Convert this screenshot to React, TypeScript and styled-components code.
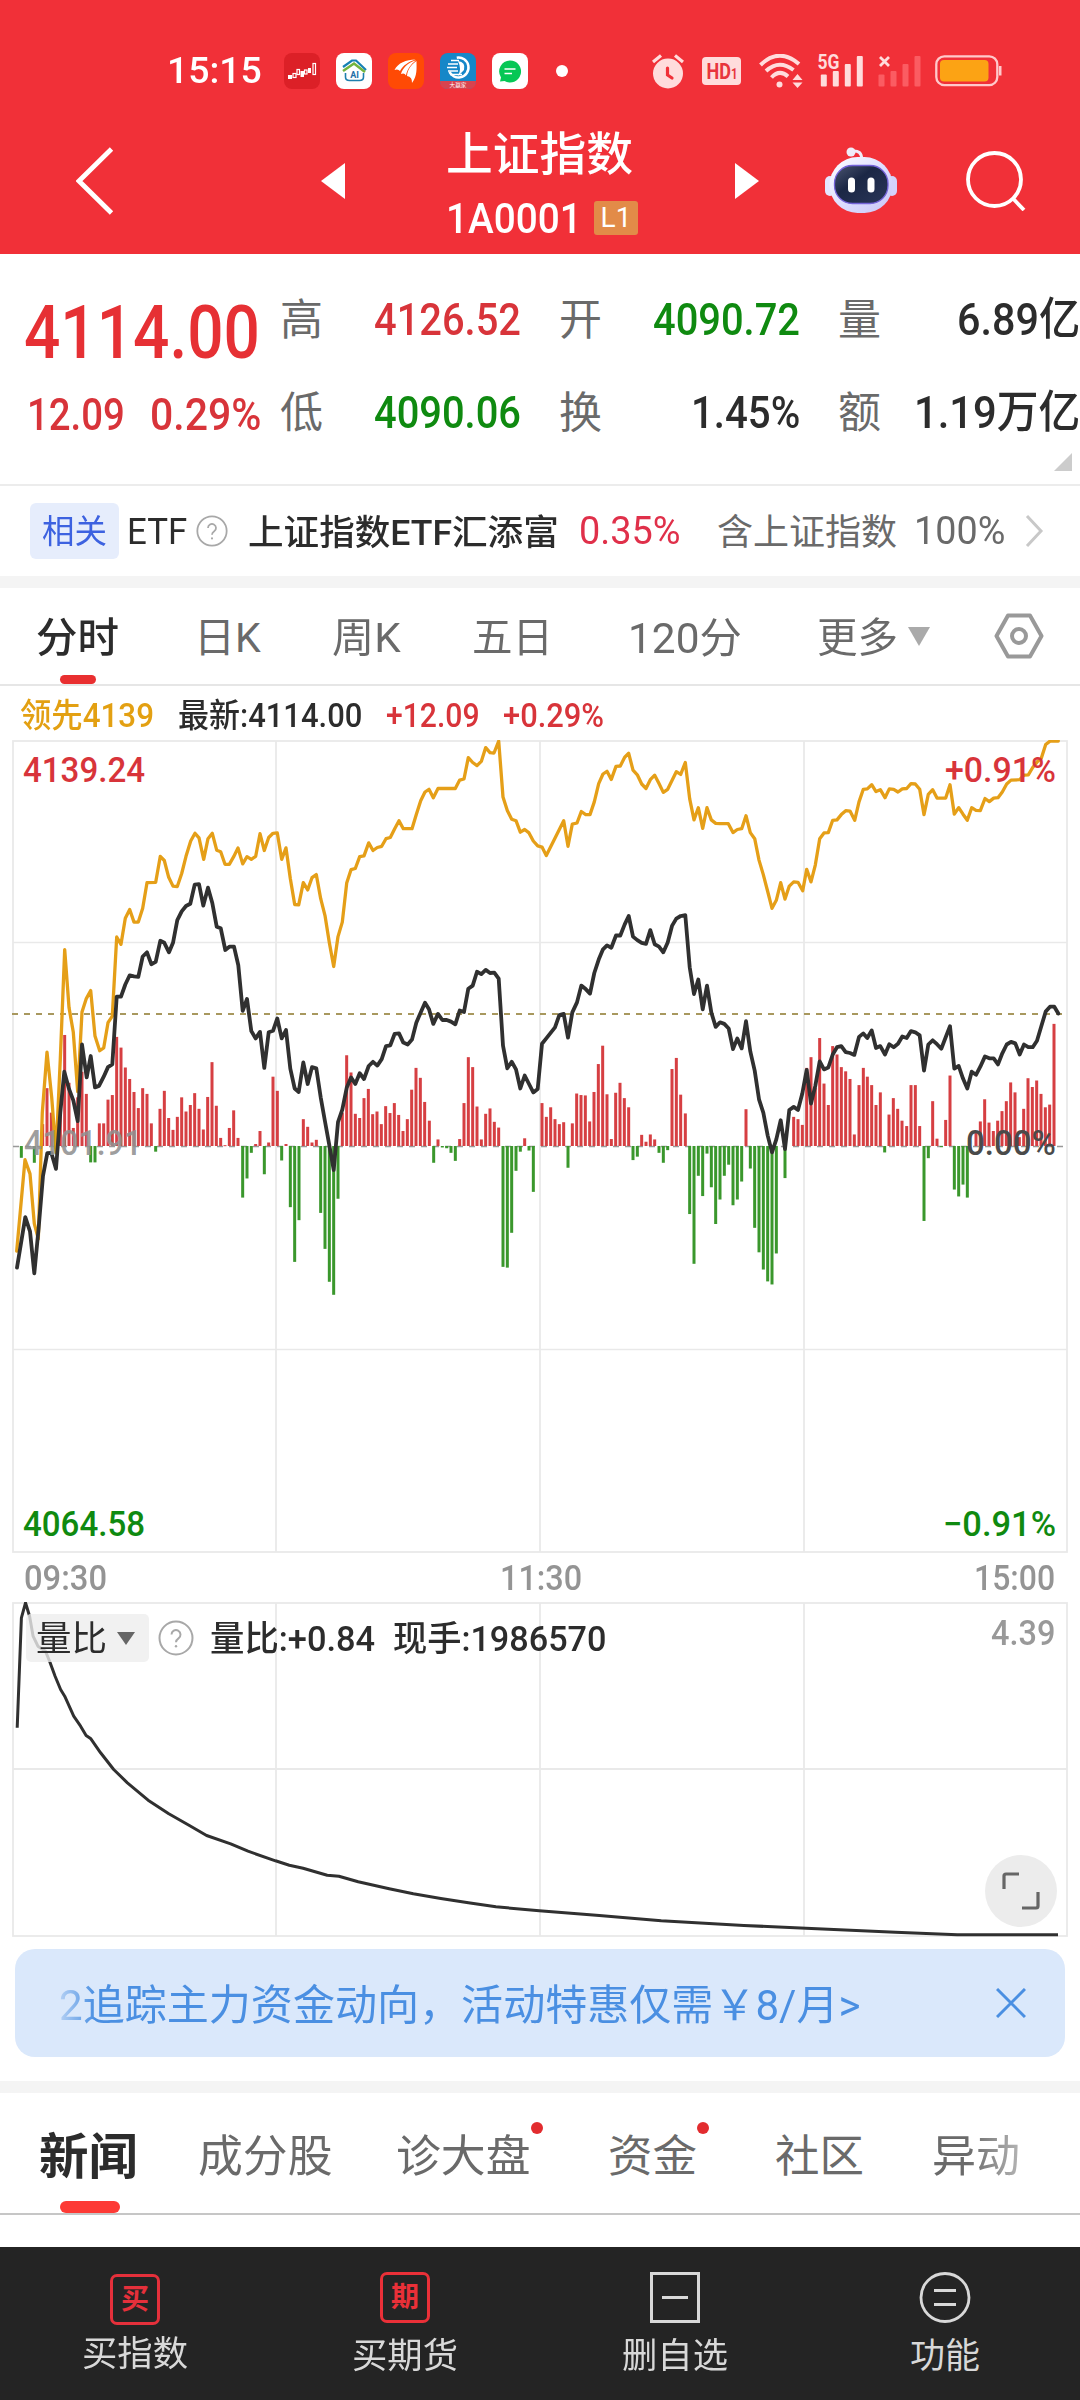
import React, { useLayoutEffect, useRef, useState } from "react";
import styled, { createGlobalStyle } from "styled-components";

const Global = createGlobalStyle`
  * { box-sizing: border-box; }
  body { margin: 0; background: #fff; font-family: Roboto, "Noto Sans CJK SC", sans-serif; }
  svg { display: block; flex: none; }
`;

const RED = "#d8343a";
const GREEN = "#0f8a10";
const INK = "#2c2c2c";
const GREY = "#6a6a6a";

/* ---------- text that is condensed to a set width ---------- */

const FitBox = styled.span<{ $w: number; $size: number; $ml?: number; $color?: string; $weight?: number; $dy?: number }>`
  display: block;
  flex: none;
  width: ${(p) => p.$w}px;
  height: ${(p) => Math.round(p.$size * 1.2)}px;
  line-height: ${(p) => Math.round(p.$size * 1.2)}px;
  margin-left: ${(p) => p.$ml ?? 0}px;
  margin-top: ${(p) => p.$dy ?? 0}px;
  font-size: ${(p) => p.$size}px;
  font-weight: ${(p) => p.$weight ?? 400};
  color: ${(p) => p.$color ?? "inherit"};
  white-space: pre;
`;
const FitInner = styled.span`
  display: inline-block;
  transform-origin: 0 50%;
`;

type FitProps = { w: number; size: number; ml?: number; color?: string; weight?: number; dy?: number; children: React.ReactNode };

function Fit({ w, size, ml, color, weight, dy, children }: FitProps) {
  const ref = useRef<HTMLSpanElement>(null);
  const [scale, setScale] = useState(1);
  useLayoutEffect(() => {
    if (ref.current) setScale(w / ref.current.offsetWidth);
  }, [w]);
  return (
    <FitBox $w={w} $size={size} $ml={ml} $color={color} $weight={weight} $dy={dy}>
      <FitInner ref={ref} style={{ transform: `scaleX(${scale})` }}>
        {children}
      </FitInner>
    </FitBox>
  );
}

/* ---------- layout ---------- */

const Screen = styled.main`
  width: 1080px;
  height: 2400px;
  display: flex;
  flex-direction: column;
  overflow: hidden;
  background: #fff;
  color: ${INK};
`;
const Header = styled.header`
  height: 254px;
  background: #f13038;
  color: #fff;
  flex: none;
`;
const StatusBar = styled.div`
  height: 106px;
  padding: 36px 78px 0 167px;
  display: flex;
  align-items: center;
`;
const StatusGroup = styled.div<{ $gap: number; $ml: string }>`
  display: flex;
  align-items: center;
  gap: ${(p) => p.$gap}px;
  margin-left: ${(p) => p.$ml};
`;
const TitleBar = styled.div`
  height: 148px;
  display: flex;
  align-items: center;
  padding: 2px 55px 0 76px;
`;
const TitleBlock = styled.div`
  width: 192px;
  margin: 8px 96px 0 101px;
  display: flex;
  flex-direction: column;
  gap: 10px;
`;
const CodeRow = styled.div`
  display: flex;
  align-items: center;
`;
const Level = styled.span`
  width: 48px;
  height: 34px;
  margin-left: 12px;
  background: #e28b48;
  border-radius: 3px;
  display: flex;
  justify-content: center;
  align-items: center;
  font-size: 28px;
  line-height: 34px;
`;
const Spacer = styled.div<{ $w: number }>`
  width: ${(p) => p.$w}px;
  flex: none;
`;

const Quotes = styled.section`
  height: 232px;
  border-bottom: 2px solid #ececec;
  display: grid;
  grid-template-columns: 280px 241px 38px 241px 38px 242px;
  grid-template-rows: 46px 46px;
  row-gap: 47px;
  padding-top: 43px;
  position: relative;
  flex: none;
`;
const QuoteCell = styled.div`
  display: flex;
  justify-content: space-between;
  align-items: center;
`;
const ChangeCell = styled.div`
  display: flex;
  align-items: center;
  padding: 3px 0 0 27px;
`;
const MainPrice = styled.div`
  display: flex;
  align-items: center;
  padding: 24px 0 0 24px;
  height: 46px;
`;
const Corner = styled.i`
  position: absolute;
  right: 8px;
  bottom: 13px;
  border-left: 18px solid transparent;
  border-bottom: 18px solid #ccc;
`;

const EtfRow = styled.section`
  height: 90px;
  display: flex;
  align-items: center;
  padding-left: 30px;
  flex: none;
`;
const RelChip = styled.span`
  width: 89px;
  height: 56px;
  border-radius: 6px;
  background: #e6edfc;
  display: flex;
  align-items: center;
  padding-left: 12px;
`;
const Band = styled.div<{ $h: number; $mt?: number }>`
  height: ${(p) => p.$h}px;
  margin-top: ${(p) => p.$mt ?? 0}px;
  background: #f4f4f4;
  flex: none;
`;
const Tabs = styled.nav<{ $h: number; $line: string }>`
  height: ${(p) => p.$h}px;
  display: flex;
  align-items: center;
  border-bottom: 2px solid ${(p) => p.$line};
  position: relative;
  flex: none;
  color: ${GREY};
`;
const Underline = styled.i<{ $w: number; $h: number; $c: string }>`
  position: absolute;
  left: 60px;
  bottom: 0;
  width: ${(p) => p.$w}px;
  height: ${(p) => p.$h}px;
  border-radius: ${(p) => p.$h / 2}px;
  background: ${(p) => p.$c};
`;
const InfoLine = styled.div`
  height: 54px;
  display: flex;
  align-items: center;
  padding: 6px 0 0 20px;
  flex: none;
`;
const TimeAxis = styled.div`
  height: 49px;
  display: flex;
  align-items: center;
  justify-content: space-between;
  padding: 2px 25px 0 24px;
  color: #949494;
  flex: none;
`;
const Panel = styled.div`
  position: relative;
  height: 335px;
  flex: none;
`;
const PanelHead = styled.div`
  position: absolute;
  top: 12px;
  left: 26px;
  right: 25px;
  height: 48px;
  display: flex;
  align-items: center;
`;
const Picker = styled.span`
  width: 123px;
  height: 48px;
  border-radius: 5px;
  background: rgba(238, 238, 238, 0.8);
  display: flex;
  align-items: center;
  padding-left: 10px;
  margin-right: 9px;
`;
const Triangle = styled.i<{ $w: number; $h: number; $c: string; $ml: number }>`
  margin-left: ${(p) => p.$ml}px;
  border: solid transparent;
  border-width: ${(p) => p.$h}px ${(p) => p.$w / 2}px 0;
  border-top-color: ${(p) => p.$c};
`;
const Expand = styled.button`
  position: absolute;
  right: 23px;
  bottom: 10px;
  width: 72px;
  height: 72px;
  padding: 0;
  border: 0;
  border-radius: 50%;
  background: #ececec;
  display: flex;
  align-items: center;
  justify-content: center;
`;
const Banner = styled.div`
  margin: 12px 15px 0;
  height: 108px;
  border-radius: 20px;
  background: #dae8fb;
  color: #4a8fe2;
  display: flex;
  align-items: center;
  justify-content: space-between;
  padding: 0 39px 0 44px;
  flex: none;
`;
const BannerText = styled.div`
  display: flex;
  mask-image: linear-gradient(90deg, rgba(0, 0, 0, 0.25), #000 36px);
`;
const Dot = styled.i`
  width: 12px;
  height: 12px;
  margin: -50px 0 0 0;
  border-radius: 50%;
  background: #e22c2f;
`;
const Faded = styled.span`
  margin-left: 68px;
  mask-image: linear-gradient(90deg, #000 40%, rgba(0, 0, 0, 0.5));
`;
const BottomBar = styled.footer`
  height: 153px;
  margin-top: auto;
  background: #242424;
  color: #d8d8d8;
  display: grid;
  grid-template-columns: repeat(4, 1fr);
  flex: none;
`;
const Action = styled.div`
  display: flex;
  flex-direction: column;
  align-items: center;
  padding-top: 25px;
  gap: 13px;
`;
const Boxed = styled.span<{ $c: string; $drop?: number }>`
  width: 50px;
  height: 51px;
  margin: ${(p) => p.$drop ?? 0}px 0 ${(p) => -(p.$drop ?? 0) * 2}px;
  border: 3px solid ${(p) => p.$c};
  border-radius: 7px;
  color: ${(p) => p.$c};
  display: flex;
  align-items: center;
  justify-content: center;
  font-size: 28px;
  line-height: 40px;
  font-weight: 700;
`;

/* ---------- chart data ---------- */

/* Three 360px wide panels; each entry is x,y pairs at 3x horizontal and 2.613x vertical resolution. */
const LEAD = [
  "50,1362 75,1123 90,1160 103,1290 115,1330 127,1000 141,842 155,960 168,1105 181,860 194,574 207,725 220,790 233,945 246,737 259,702 272,681 285,800 299,838 311,831 324,765 337,748 350,541 363,560 376,492 389,469 402,502 415,502 428,466 441,399 467,398 481,330 493,341 506,385 519,408 532,409 545,375 558,330 572,290 585,270 597,282 611,338 624,284 637,270 650,314 662,318 675,351 688,351 701,331 714,308 728,350 741,331 754,338 767,330 780,271 793,315 806,281 819,270 832,269 845,338 858,308 871,388 884,456 896,457 910,399 923,418 936,386 949,378 962,441 975,485 988,555 1001,618 1014,540 1027,502 1040,400 1053,365 1066,362 1079,331",
  "12,329 26,295 39,315 52,307 65,304 78,284 91,281 104,258 117,237 130,258 156,258 169,221 182,185 195,162 207,155 220,177 234,153 286,153 299,131 312,128 325,72 338,85 351,93 364,82 377,46 390,59 402,60 416,29 429,175 442,210 455,233 468,237 481,267 494,260 507,269 520,290 533,303 546,306 559,328 611,237 624,304 637,246 651,243 664,213 677,221 690,221 703,188 716,140 729,115 741,108 754,129 768,95 781,94 794,71 806,61 819,105 832,117 845,141 858,153 871,130 884,118 897,140 910,163 923,155 936,132 949,109 962,116 976,85 989,180 1002,235 1015,203 1028,257 1041,203 1054,235 1067,244 1080,245",
  "25,245 39,268 52,260 65,258 78,224 91,268 104,284 117,340 130,378 143,422 156,466 169,445 182,399 195,442 208,408 221,397 234,398 248,420 260,364 273,397 286,353 299,284 312,269 325,268 338,236 351,235 364,221 377,211 390,212 404,236 417,188 430,155 442,154 455,143 468,161 481,156 495,177 508,154 521,155 534,162 547,154 560,153 573,140 586,141 599,155 612,221 625,168 638,156 651,178 677,178 690,143 703,220 716,203 729,220 742,236 755,203 768,210 781,211 795,179 808,187 821,178 834,177 847,162 860,141 873,131 899,130 912,118 925,117 938,98 951,84 964,74 977,38 990,29 1015,29",
];
const PRICE = [
  "51,1405 76,1273 90,1310 103,1420 116,1300 129,1165 142,1106 154,1105 168,1147 181,1000 193,893 207,938 220,968 233,1022 246,822 260,908 272,852 285,934 297,930 311,906 324,881 337,874 350,697 363,697 376,665 389,641 402,644 415,645 428,592 441,581 454,612 467,606 481,551 493,556 507,581 519,556 532,497 545,474 558,460 571,454 584,404 597,403 610,459 624,412 637,452 650,514 662,518 676,575 689,566 702,566 715,615 728,734 741,703 754,787 767,806 780,789 793,883 806,790 819,786 832,754 845,806 858,784 871,885 884,937 896,946 910,869 923,925 936,881 949,884 962,960 975,1023 988,1085 1001,1150 1014,1025 1027,992 1040,935 1053,908 1066,925 1079,897",
  "12,912 26,878 39,867 52,877 65,860 78,826 91,824 104,794 117,793 130,817 143,822 156,809 169,765 182,738 195,713 207,730 220,768 234,742 247,758 260,758 273,762 286,769 299,733 312,737 325,676 338,668 351,632 364,638 377,627 390,635 403,634 416,650 429,825 442,884 455,867 468,887 481,937 494,903 507,925 520,947 533,938 546,820 559,806 585,777 598,745 611,742 624,804 637,738 651,712 664,668 677,677 690,689 703,635 716,600 729,573 741,563 754,569 768,537 781,537 794,508 806,486 819,540 832,549 845,556 858,559 871,523 884,560 897,566 910,581 923,555 936,512 949,493 962,486 976,484 989,620 1002,690 1015,652 1028,730 1041,668 1054,738 1067,776 1080,764",
  "13,768 26,780 39,834 52,806 65,832 78,761 91,840 104,890 117,965 130,1000 143,1060 156,1104 169,1070 182,1020 195,1095 208,993 221,985 234,993 247,950 260,888 273,976 286,930 299,866 312,887 325,882 338,848 351,829 364,826 377,842 390,844 403,849 417,802 430,793 442,805 455,785 468,831 481,826 495,848 508,821 521,829 534,820 547,801 560,805 573,787 586,790 599,798 612,890 625,822 638,811 651,821 664,833 677,803 690,774 703,885 716,878 729,911 742,937 755,893 768,901 781,880 795,853 808,858 821,858 834,874 847,845 860,822 873,815 886,819 899,848 912,822 925,829 938,829 951,812 964,774 977,736 990,723 1003,723 1015,741",
];
const BARS = [
  "64,1118 103,1131 128,1030 141,936 154,1000 168,1080 181,980 194,797 207,922 220,1040 233,960 246,893 259,951 272,1130 285,1130 298,1028 311,1028 324,966 337,954 350,802 363,830 376,882 389,912 402,946 415,988 428,936 441,951 454,1028 467,1102 480,990 493,943 506,1014 519,1045 532,1011 545,960 558,997 571,980 584,949 597,990 610,1044 623,959 636,868 649,982 662,1066 675,1085 688,1040 701,994 714,1066 728,1222 741,1172 754,1105 767,1082 780,1048 793,1161 806,1078 819,906 832,943 845,1125 858,1082 871,1247 884,1390 897,1281 910,1017 923,1037 936,1078 949,1071 962,1262 975,1356 988,1442 1001,1476 1014,1225 1027,1000 1040,850 1053,895 1066,1003 1079,1014",
  "12,962 25,938 38,1004 51,997 64,1030 77,983 90,1001 103,975 116,1006 129,1048 142,1017 155,940 168,883 181,909 194,972 208,1021 221,1131 234,1070 247,1091 260,1093 273,1105 286,1126 299,1069 312,975 325,855 338,881 351,984 364,1070 377,1003 390,989 403,1024 416,1039 429,1403 442,1405 455,1314 468,1152 481,1102 494,1067 507,1099 520,1207 546,975 559,1011 572,986 585,1017 598,1030 611,1025 624,1144 637,1028 650,950 663,954 676,955 689,1023 702,946 715,873 728,825 741,952 754,1069 767,948 780,922 793,962 806,986 819,1124 832,1115 845,1058 858,1076 871,1057 884,1070 897,1105 910,1131 923,1098 936,886 949,857 962,953 976,1002 989,1265 1002,1395 1015,1165 1028,1218 1041,1107 1054,1195 1067,1291 1080,1227",
  "13,1165 26,1136 39,1242 52,1227 65,1180 78,991 91,1146 104,1301 117,1365 130,1410 143,1441 156,1449 169,1368 195,1171 221,1011 234,1017 247,1032 260,883 273,855 286,935 299,805 312,924 325,980 338,826 351,848 364,881 377,892 390,912 403,1057 417,928 430,883 442,906 455,928 468,980 481,947 494,1104 507,1005 520,962 533,990 546,1021 560,1035 573,928 586,928 599,1035 612,1283 625,1119 638,970 651,1068 664,1090 677,1019 690,903 703,1201 716,1219 729,1188 742,1222 768,1048 781,1023 794,965 807,1026 820,1048 833,1021 846,996 859,970 872,921 885,947 898,1064 911,990 924,910 937,933 950,916 963,951 976,986 989,979 1002,768",
];
const RATIO =
  "25,745 31,415 37,370 43,410 48,470 55,500 66,515 72,545 80,590 88,630 94,650 107,710 117,740 125,768 132,778 146,820 165,870 185,910 215,962 245,1003 275,1038 300,1068 335,1093 360,1115 400,1144 420,1157 440,1166 475,1187 492,1190 520,1207 565,1228 600,1243 640,1257 680,1270 720,1282 783,1294 870,1308 960,1324 1080,1338 1170,1346 1300,1358 1390,1366 1536,1366";

const pairs = (s: string) => s.split(" ").map((p) => p.split(",").map(Number));
const project = (panels: string[]) =>
  panels.flatMap((s, i) => pairs(s).map(([x, y]) => [i * 360 + x / 3, y * 0.38265 - 10]));
const toPoints = (pts: number[][]) => pts.map(([x, y]) => `${x.toFixed(1)},${y.toFixed(1)}`).join(" ");

const ZERO = 406;
const COLS = [276, 540, 804];

const Label = styled.text<{ $c: string; $w?: number }>`
  font-size: 34.5px;
  font-weight: ${(p) => p.$w ?? 500};
  fill: ${(p) => p.$c};
`;

function MinuteChart() {
  return (
    <svg width="1080" height="813" viewBox="0 0 1080 813">
      <g stroke="#e9e9e9" strokeWidth="1.8" fill="none">
        <rect x="13" y="1" width="1054" height="811" />
        {COLS.map((x) => (
          <path key={x} d={`M${x} 1V812`} />
        ))}
        <path d="M13 202.5H1067M13 609.5H1067" strokeWidth="1.5" />
      </g>
      <path d="M13 406.4H1067" stroke="#999" strokeWidth="1.5" strokeDasharray="6 6" />
      <path d="M12 274H1067" stroke="#a8985e" strokeWidth="1.8" strokeDasharray="6 6" />
      {project(BARS).map(([x, y], i) => (
        <rect
          key={i}
          x={x - 1.5}
          y={Math.min(y, ZERO)}
          width="3"
          height={Math.max(1, Math.abs(y - ZERO))}
          fill={y > ZERO ? "#3a972c" : "#d63f42"}
        />
      ))}
      <g fill="none" strokeLinejoin="round" strokeLinecap="round">
        <polyline points={toPoints(project(LEAD))} stroke="#e59f18" strokeWidth="3.3" />
        <polyline points={toPoints(project(PRICE))} stroke="#303030" strokeWidth="3.8" />
      </g>
      <Label x="24" y="415" textLength="118" lengthAdjust="spacingAndGlyphs" $c="rgba(145,145,145,0.9)">4101.91</Label>
      <Label x="966" y="415" textLength="90" lengthAdjust="spacingAndGlyphs" $c="#4a4a4a">0.00%</Label>
      <Label x="23" y="42" textLength="122" lengthAdjust="spacingAndGlyphs" $c={RED}>4139.24</Label>
      <Label x="945" y="42" textLength="111" lengthAdjust="spacingAndGlyphs" $c={RED}>+0.91%</Label>
      <Label x="23" y="796" textLength="122" lengthAdjust="spacingAndGlyphs" $c={GREEN}>4064.58</Label>
      <Label x="943" y="796" textLength="113" lengthAdjust="spacingAndGlyphs" $c={GREEN}>−0.91%</Label>
    </svg>
  );
}

function RatioChart() {
  const pts = pairs(RATIO).map(([x, y]) => [x * 0.6888, y / 3 - 122.5]);
  return (
    <svg width="1080" height="335" viewBox="0 0 1080 335">
      <g stroke="#e9e9e9" strokeWidth="1.8" fill="none">
        <rect x="13" y="1" width="1054" height="333" />
        {COLS.map((x) => (
          <path key={x} d={`M${x} 1V334`} />
        ))}
        <path d="M13 167H1067" />
      </g>
      <polyline points={toPoints(pts)} fill="none" stroke="#303030" strokeWidth="3" strokeLinejoin="round" />
    </svg>
  );
}

/* ---------- icons ---------- */

function Help({ size, ml }: { size: number; ml: number }) {
  return (
    <>
      <Spacer $w={ml} />
      <svg width={size} height={size} viewBox="0 0 36 36" fill="none" stroke="#a8a8a8" strokeWidth="2">
        <circle cx="18" cy="18" r="16.5" />
        <path d="M13.500 14.500a4.500 4.500 0 1 1 7 3.800c-1.800 1.200-2.500 2-2.500 4" />
        <circle cx="18" cy="26.3" r="1.2" fill="#a8a8a8" stroke="none" />
      </svg>
    </>
  );
}

const AppIcons = () => (
  <>
    <svg width="36" height="36" viewBox="0 0 36 36">
      <rect width="36" height="36" rx="8" fill="#dc2027" />
      <g fill="#fff">
        <rect x="4" y="22" width="4" height="4" />
        <rect x="16.5" y="18" width="3.5" height="6" />
        <rect x="24" y="15" width="3" height="5" />
      </g>
      <g fill="none" stroke="#fff" strokeWidth="1.2">
        <rect x="9" y="20.5" width="3" height="4" />
        <rect x="13" y="16.5" width="2.5" height="5" />
        <rect x="20.5" y="17" width="2.5" height="4" />
        <rect x="29" y="10.5" width="2.5" height="11" />
      </g>
    </svg>
    <svg width="36" height="36" viewBox="0 0 36 36">
      <rect width="36" height="36" rx="8" fill="#fff" />
      <g fill="none" strokeWidth="2.2">
        <path d="M7 14 16 7.500h4L30 17" stroke="#1681b5" />
        <path d="M7 18 18 10.500 29 19" stroke="#72b43e" strokeWidth="2.6" />
        <path d="M9.500 20v4q0 3.500 4 3.500h10q4 0 4-3.500v-4" stroke="#1e7fae" strokeWidth="1.6" />
      </g>
      <text x="18.5" y="24.5" fontSize="9" fontWeight="700" textAnchor="middle" fill="#1e6fa8">AI</text>
    </svg>
    <svg width="36" height="36" viewBox="0 0 36 36">
      <rect width="36" height="36" rx="8" fill="#ff4a05" />
      <g fill="#fff">
        <path d="M6.500 17C10 10 18 6.500 27.500 6.500 20 9 15 12.500 12 18Q10 15.500 6.500 17Z" />
        <path d="M13 21C14.500 15 20 9.500 28 7.200 22.500 11.500 19 16.500 18 22.500Q16.500 19.500 13 21Z" />
        <path d="M19 23C19.500 17 23 11.500 28.500 8 28.500 15 29.500 23 24 30Q24.500 24 19 23Z" />
      </g>
    </svg>
    <svg width="36" height="36" viewBox="0 0 36 36">
      <rect width="36" height="36" rx="8" fill="#1687c8" />
      <path d="M0 28H36Q36 36 28 36H8Q0 36 0 28Z" fill="#d8434f" />
      <circle cx="18.5" cy="14.5" r="10" fill="none" stroke="#fff" strokeWidth="2.5" strokeDasharray="44 19" transform="rotate(-100 18.5 14.5)" />
      <path d="M8 11h10M7 14.500h10M8 18h10M10 21.500h12M11 7.500h8" stroke="#fff" strokeWidth="1.5" />
      <path d="M18 8q8 1 6 9l-6 6q4-7 0-15Z" fill="#fff" />
      <text x="18" y="33.7" fontSize="5.6" textAnchor="middle" fill="#fff">大赢家</text>
    </svg>
    <svg width="36" height="36" viewBox="0 0 36 36">
      <rect width="36" height="36" rx="8" fill="#fff" />
      <path d="M18 7.500a11 11 0 1 1-5.500 20.500L8 28.500l1-4A11 11 0 0 1 18 7.500Z" fill="#06c755" />
      <path d="M12.500 16h11M12.500 20.500h7.500" stroke="#fff" strokeWidth="1.7" />
    </svg>
  </>
);

const PINK = "#ffdcdc";
const SIGNAL = [
  { x: 0.5, y: 20.5 },
  { x: 12.5, y: 17 },
  { x: 24.5, y: 10 },
  { x: 36.5, y: 2 },
];
const SignalBars = ({ dx, fill }: { dx: number; fill: string }) => (
  <g fill={fill}>
    {SIGNAL.map((b) => (
      <rect key={b.x} x={b.x + dx} y={b.y} width="6" height={32.5 - b.y} rx="1" />
    ))}
  </g>
);
const SystemIcons = () => (
  <>
    <StatusGroup $gap={18} $ml="0">
      <svg width="32" height="35" viewBox="0 0 32 35">
        <circle cx="16" cy="19.5" r="15" fill={PINK} />
        <path d="M1 8 9 1.500M31 8 23 1.500" stroke={PINK} strokeWidth="3.2" />
        <path d="M15.500 14v7l4.500 3" stroke="#f13038" strokeWidth="3.2" fill="none" strokeLinecap="round" />
      </svg>
      <svg width="39" height="28" viewBox="0 0 39 28">
        <rect width="39" height="28" rx="4" fill={PINK} />
        <text x="4.5" y="22" fontSize="22" fontWeight="700" textLength="31" lengthAdjust="spacingAndGlyphs" fill="#e8353c">
          HD<tspan fontSize="14">1</tspan>
        </text>
      </svg>
      <svg width="44" height="35" viewBox="0 0 44 35">
        <g fill="none" stroke={PINK} strokeWidth="4">
          <path d="M1.500 11Q20 -7 40 10" />
          <path d="M7 17Q20 5 34.500 16" />
          <path d="M12.500 23.500Q20.500 15 29 22.500" />
        </g>
        <circle cx="20.5" cy="30.5" r="3" fill={PINK} />
        <path d="M33.500 26 38.500 20 43.500 26ZM33.500 28.500H43.500L38.500 34Z" fill={PINK} />
      </svg>
    </StatusGroup>
    <svg width="47" height="35" viewBox="0 0 47 35">
      <text x="0.5" y="14.5" fontSize="20" fontWeight="700" textLength="22" lengthAdjust="spacingAndGlyphs" fill={PINK}>5G</text>
      <SignalBars dx={3.3} fill={PINK} />
    </svg>
    <svg width="43" height="35" viewBox="0 0 43 35">
      <path d="M2 3 11 12M11 3 2 12" stroke={PINK} strokeWidth="2.8" />
      <SignalBars dx={0} fill="#fb5c62" />
    </svg>
    <svg width="67" height="32" viewBox="0 0 67 32">
      <rect x="1.3" y="1.3" width="61" height="28.8" rx="8" fill="none" stroke="#ffc9cb" strokeWidth="2.3" />
      <rect x="5" y="5" width="48.5" height="21.5" rx="4" fill="#fca314" />
      <path d="M65.200 11v9.500" stroke="#ffc9cb" strokeWidth="2.6" />
    </svg>
  </>
);

const Robot = () => (
  <svg width="72" height="68" viewBox="0 0 72 68">
    <defs>
      <linearGradient id="shell" x1="0" y1="0" x2="1" y2="1">
        <stop offset="0" stopColor="#fff" />
        <stop offset="0.55" stopColor="#dcdcff" />
        <stop offset="1" stopColor="#c9c6f6" />
      </linearGradient>
      <linearGradient id="visor" x1="0" y1="0" x2="1" y2="1">
        <stop offset="0" stopColor="#4b5570" />
        <stop offset="0.4" stopColor="#1b2745" />
        <stop offset="1" stopColor="#2a3658" />
      </linearGradient>
    </defs>
    <circle cx="26" cy="5" r="4.5" fill="#f0ecf8" />
    <path d="M27 4Q37 3 36.500 12" fill="none" stroke="#f0ecf8" strokeWidth="3" />
    <rect x="0" y="29" width="10" height="20" rx="5" fill="#e4e6ff" />
    <rect x="62" y="29" width="10" height="20" rx="5" fill="#d4d2fb" />
    <rect x="4.5" y="10" width="63" height="56" rx="28" fill="url(#shell)" />
    <rect x="9.5" y="18.500" width="53.5" height="38" rx="18" fill="url(#visor)" stroke="#7463d8" strokeWidth="1.3" />
    <rect x="23" y="30.5" width="7" height="15" rx="3.5" fill="#fff" />
    <rect x="42.5" y="30.5" width="7" height="15" rx="3.5" fill="#fff" />
  </svg>
);

/* ---------- page ---------- */

type Quote = { label: string; value: string; w: number; color: string };
const QUOTES: Quote[][] = [
  [
    { label: "高", value: "4126.52", w: 147, color: RED },
    { label: "开", value: "4090.72", w: 147, color: GREEN },
    { label: "量", value: "6.89亿", w: 123, color: INK },
  ],
  [
    { label: "低", value: "4090.06", w: 147, color: GREEN },
    { label: "换", value: "1.45%", w: 109, color: INK },
    { label: "额", value: "1.19万亿", w: 166, color: INK },
  ],
];

const QuoteCells = ({ row }: { row: Quote[] }) => (
  <>
    {row.map((q, i) => (
      <React.Fragment key={q.label}>
        {i > 0 && <span />}
        <QuoteCell>
          <Fit w={43} size={43} color={GREY}>{q.label}</Fit>
          <Fit w={q.w} size={45} weight={500} color={q.color}>{q.value}</Fit>
        </QuoteCell>
      </React.Fragment>
    ))}
  </>
);

export default function App() {
  return (
    <Screen>
      <Global />
      <Header>
        <StatusBar>
          <Fit w={95} size={37} weight={500}>15:15</Fit>
          <StatusGroup $gap={16} $ml="22px">
            <AppIcons />
          </StatusGroup>
          <Spacer $w={28} />
          <svg width="12" height="12" viewBox="0 0 12 12">
            <circle cx="6" cy="6" r="6" fill="#fff" />
          </svg>
          <StatusGroup $gap={14} $ml="auto">
            <SystemIcons />
          </StatusGroup>
        </StatusBar>
        <TitleBar>
          <svg width="38" height="68" viewBox="0 0 38 68" fill="none" stroke="#fff" strokeWidth="4.8">
            <path d="M35.500 2 3 34 35.500 66" />
          </svg>
          <Spacer $w={207} />
          <svg width="24" height="36" viewBox="0 0 24 36" fill="#fff">
            <path d="M24 0V36L0 18Z" />
          </svg>
          <TitleBlock>
            <Fit w={187} size={46} weight={500}>上证指数</Fit>
            <CodeRow>
              <Fit w={136} size={43} weight={500}>1A0001</Fit>
              <Level>L1</Level>
            </CodeRow>
          </TitleBlock>
          <Spacer $w={1} />
          <svg width="24" height="36" viewBox="0 0 24 36" fill="#fff">
            <path d="M0 0V36L24 18Z" />
          </svg>
          <Spacer $w={66} />
          <Robot />
          <Spacer $w={69} />
          <svg width="60" height="60" viewBox="0 0 60 60" fill="none" stroke="#fff" strokeWidth="3.8">
            <circle cx="28.5" cy="28.5" r="26.5" />
            <path d="M46.500 47 58 59" />
          </svg>
        </TitleBar>
      </Header>

      <Quotes>
        <MainPrice>
          <Fit w={236} size={74} weight={500} color="#e63034">4114.00</Fit>
        </MainPrice>
        <QuoteCells row={QUOTES[0]} />
        <ChangeCell>
          <Fit w={98} size={45} weight={500} color={RED}>12.09</Fit>
          <Fit ml={25} w={111} size={45} weight={500} color={RED}>0.29%</Fit>
        </ChangeCell>
        <QuoteCells row={QUOTES[1]} />
        <Corner />
      </Quotes>

      <EtfRow>
        <RelChip>
          <Fit w={65} size={33} dy={2} color="#3d62e0">相关</Fit>
        </RelChip>
        <Fit ml={8} w={60} size={36} dy={3}>ETF</Fit>
        <Help size={32} ml={9} />
        <Fit ml={20} w={311} size={35} dy={5} weight={500}>上证指数ETF汇添富</Fit>
        <Fit ml={20} w={102} size={39} color="#e0304a">0.35%</Fit>
        <Fit ml={36} w={180} size={36} dy={5} color={GREY}>含上证指数</Fit>
        <Fit ml={17} w={91} size={39} color={GREY}>100%</Fit>
        <Spacer $w={20} />
        <svg width="19" height="34" viewBox="0 0 19 34" fill="none" stroke="#c8c8c8" strokeWidth="3">
          <path d="M2 2 16 17 2 32" />
        </svg>
      </EtfRow>
      <Band $h={12} />

      <Tabs $h={98} $line="#e6e6e6">
        <Fit ml={36} w={83} size={41} dy={5} weight={500} color={INK}>分时</Fit>
        <Fit ml={75} w={67} size={41} dy={5}>日K</Fit>
        <Fit ml={71} w={69} size={41} dy={5}>周K</Fit>
        <Fit ml={71} w={81} size={41} dy={5}>五日</Fit>
        <Fit ml={75} w={114} size={42} dy={5}>120分</Fit>
        <Fit ml={75} w={81} size={41} dy={5}>更多</Fit>
        <Triangle $w={23} $h={19} $c="#aaa" $ml={10} />
        <Spacer $w={64} />
        <svg width="50" height="46" viewBox="0 0 50 46" fill="none" stroke="#999" strokeLinejoin="round">
          <path d="M14 2.500H36L47.500 23 36 43.500H14L2.500 23Z" strokeWidth="4" />
          <circle cx="25" cy="23" r="7" strokeWidth="4" />
        </svg>
        <Underline $w={36} $h={9} $c="#e92f30" />
      </Tabs>
      <InfoLine>
        <Fit w={134} size={33} weight={500} color="#e3a012">领先4139</Fit>
        <Fit ml={24} w={184} size={33} weight={500}>最新:4114.00</Fit>
        <Fit ml={24} w={94} size={33} weight={500} color={RED}>+12.09</Fit>
        <Fit ml={23} w={101} size={33} weight={500} color={RED}>+0.29%</Fit>
      </InfoLine>
      <MinuteChart />
      <TimeAxis>
        <Fit w={83} size={35.5} weight={500}>09:30</Fit>
        <Fit w={82} size={35.5} weight={500}>11:30</Fit>
        <Fit w={81} size={35.5} weight={500}>15:00</Fit>
      </TimeAxis>
      <Panel>
        <RatioChart />
        <PanelHead>
          <Picker>
            <Fit w={71} size={35} dy={4}>量比</Fit>
            <Triangle $w={18} $h={13} $c="#666" $ml={10} />
          </Picker>
          <Help size={36} ml={0} />
          <Fit ml={16} w={165} size={35} dy={4} weight={500}>量比:+0.84</Fit>
          <Fit ml={18} w={213} size={35} dy={4} weight={500}>现手:1986570</Fit>
          <Fit ml={385} w={64} size={35.5} dy={-10} weight={500} color="#999">4.39</Fit>
        </PanelHead>
        <Expand>
          <svg width="38" height="38" viewBox="0 0 38 38" fill="none" stroke="#666" strokeWidth="3.2">
            <path d="M2 17V4Q2 2 4 2H17M36 20V34Q36 36 34 36H20" />
          </svg>
        </Expand>
      </Panel>

      <Banner>
        <BannerText>
          <Fit w={802} size={42} dy={6}>2追踪主力资金动向，活动特惠仅需￥8/月&gt;</Fit>
        </BannerText>
        <svg width="30" height="30" viewBox="0 0 30 30" stroke="#4a8fe2" strokeWidth="3">
          <path d="M1 1 29 29M29 1 1 29" />
        </svg>
      </Banner>
      <Band $h={12} $mt={24} />

      <Tabs $h={122} $line="#c6c6c6">
        <Fit ml={39} w={99} size={49} weight={700} dy={8} color={INK}>新闻</Fit>
        <Fit ml={60} w={135} size={44.5} dy={8}>成分股</Fit>
        <Fit ml={63} w={135} size={44.5} dy={8}>诊大盘</Fit>
        <Dot />
        <Fit ml={65} w={89} size={44.5} dy={8}>资金</Fit>
        <Dot />
        <Fit ml={66} w={89} size={44.5} dy={8}>社区</Fit>
        <Faded>
          <Fit w={88} size={44.5} dy={8}>异动</Fit>
        </Faded>
        <Underline $w={60} $h={12} $c="#fd3a35" />
      </Tabs>

      <BottomBar>
        <Action>
          <Boxed $c="#e5303b" $drop={2}>买</Boxed>
          <Fit w={106} size={35}>买指数</Fit>
        </Action>
        <Action>
          <Boxed $c="#ea3038">期</Boxed>
          <Fit w={106} size={35}>买期货</Fit>
        </Action>
        <Action>
          <svg width="50" height="51" viewBox="0 0 50 51" fill="none" stroke="#d8d8d8" strokeWidth="3">
            <rect x="1.5" y="1.5" width="47" height="48" />
            <path d="M12 25.500H38" />
          </svg>
          <Fit w={106} size={35}>删自选</Fit>
        </Action>
        <Action>
          <svg width="52" height="51" viewBox="0 0 52 51" fill="none" stroke="#d8d8d8" strokeWidth="2.8">
            <circle cx="26" cy="25.5" r="24" />
            <path d="M15 18.500H37M15 32.500H37" />
          </svg>
          <Fit w={70} size={35}>功能</Fit>
        </Action>
      </BottomBar>
    </Screen>
  );
}
